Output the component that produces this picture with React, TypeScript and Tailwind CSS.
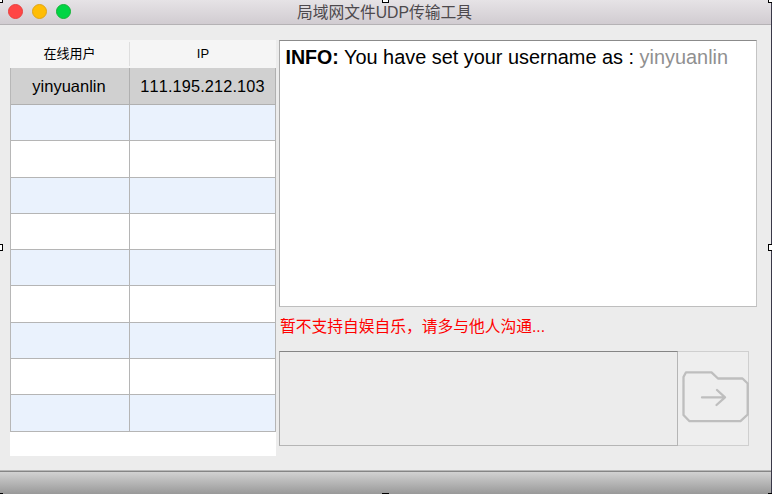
const users = [{ name: "yinyuanlin", ip: "111.195.212.103" }];
const emptyRows = [0, 1, 2, 3, 4, 5, 6, 7, 8];

const handles = [
  "left-[-4px] top-[-4px]",
  "left-[382px] top-[-4px]",
  "left-[768px] top-[-4px]",
  "left-[-4px] top-[244px]",
  "left-[768px] top-[244px]",
  "left-[-4px] top-[493px]",
  "left-[382px] top-[493px]",
  "left-[768px] top-[493px]",
];

function TitleBar() {
  return (
    <header className="grid h-[25px] grid-cols-[297px_1fr] border-b border-[#b5b2b5] bg-linear-to-b from-[#e6e3e6] to-[#d1ccd1]">
      <div className="flex gap-[9px] pt-[4px] pl-[8px]">
        <span className="size-[15px] rounded-full border border-[#e9403f] bg-[#ff4545]" />
        <span className="size-[15px] rounded-full border border-[#e0a416] bg-[#ffbd05]" />
        <span className="size-[15px] rounded-full border border-[#14b437] bg-[#00d544]" />
      </div>
      <h1 className="pt-[1px] text-[15.75px] leading-[24px] whitespace-nowrap text-[#4d494d]">
        局域网文件UDP传输工具
      </h1>
    </header>
  );
}

function UserTable() {
  return (
    <section className="flex h-[416px] w-[266px] flex-col bg-white">
      <div className="grid h-[28px] grid-cols-[119px_147px] bg-[#f5f5f5] text-center text-[13px] leading-[27px] text-black">
        <div>在线用户</div>
        <div className="my-[2px] border-l border-[#dedede] leading-[23px]">IP</div>
      </div>
      <div className="border-l border-[#b7b7b7]">
        {users.map((u) => (
          <div key={u.ip} className="grid h-[37px] grid-cols-[118px_146px] border-r border-b border-[#b0b0b0] bg-[#d0d0d0] text-center text-[16.5px] leading-[37px] text-black">
            <div className="-ml-[2px]">{u.name}</div>
            <div className="border-l border-[#b0b0b0] text-[16.3px] tracking-[0.14px] [font-kerning:none]">{u.ip}</div>
          </div>
        ))}
        {emptyRows.map((i) => (
          <div key={i} className="grid h-[36.3px] grid-cols-[118px_146px] border-r border-b border-[#b5b5b5] odd:bg-white even:bg-[#eaf2fd]">
            <div />
            <div className="border-l border-[#b5b5b5]" />
          </div>
        ))}
      </div>
    </section>
  );
}

function SendButton() {
  return (
    <button className="h-[95px] w-[71px] border border-l-0 border-[#cfcfcf] bg-[#eeeeee]">
      <svg width="70" height="93" viewBox="678 352 70 93" overflow="visible" fill="none" stroke="#bebebe" strokeWidth="2.3" strokeLinejoin="round" strokeLinecap="round">
        <path d="M686 372.3H711.5L718 378.5H742.5L747.7 383.5V414.5L740.5 421.2H689.5L683.5 415V377Z" />
        <path d="M702 397.4H725M717 390L725 397.4L716.5 405" />
      </svg>
    </button>
  );
}

export default function App() {
  return (
    <main className="relative flex h-[494px] w-[772px] flex-col overflow-hidden bg-[#ececec] font-['Liberation_Sans','Noto_Sans_CJK_SC',sans-serif]">
      <div className="flex h-[494px] w-[772px] flex-col border-r border-[#393848]">
        <TitleBar />
        <div className="flex h-[445px] gap-[3px] pt-[15px] pl-[10px]">
          <UserTable />
          <section className="flex w-[478px] flex-col">
            <div className="h-[267px] border border-t-[#8b8b8b] border-r-[#c4c4c4] border-b-[#bebebe] border-l-[#aaaaaa] bg-white pt-[4px] pl-[5.5px] text-[19.9px] leading-[24px] whitespace-nowrap text-black">
              <b className="text-[19.6px]">INFO:</b> You have set your username as : <span className="text-[#909090]">yinyuanlin</span>
            </div>
            <p className="h-[43px] pl-px text-[15.75px] leading-[40px] whitespace-nowrap text-[#ff0000]">
              暂不支持自娱自乐，请多与他人沟通...
            </p>
            <div className="flex pt-px">
              <div className="h-[95px] w-[399px] border border-t-[#858585] border-r-[#b5b5b5] border-b-[#b5b5b5] border-l-[#aaaaaa]" />
              <SendButton />
            </div>
          </section>
        </div>
        <footer className="h-[24px] border-t border-[#b8b8b8]">
          <div className="h-[23px] border-t border-[#858585] bg-linear-to-b from-[#d2d2d2] to-[#999999]" />
        </footer>
      </div>
      {handles.map((pos) => (
        <span key={pos} className={`absolute size-[7px] border border-black bg-white ${pos}`} />
      ))}
    </main>
  );
}
